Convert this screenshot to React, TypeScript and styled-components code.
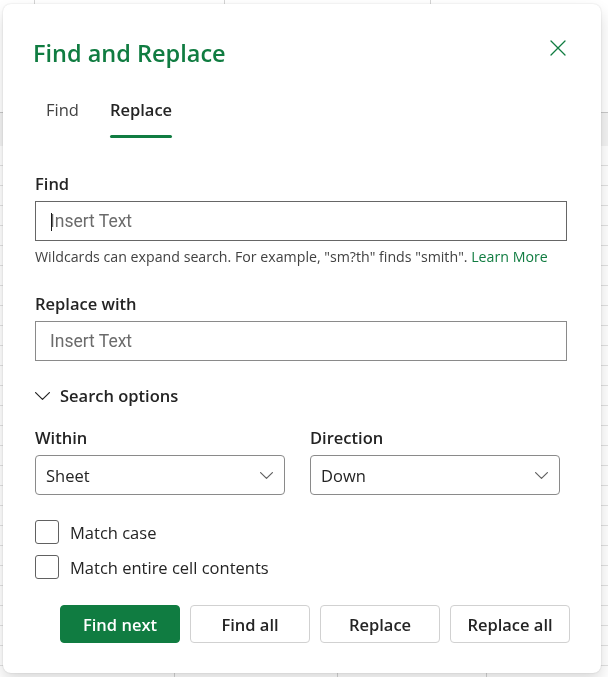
import React from "react";
import styled, { createGlobalStyle } from "styled-components";

const GREEN = "#107c41";
const TEXT = "#242424";

const Global = createGlobalStyle`
  html, body {
    margin: 0;
    padding: 0;
  }
  body {
    width: 608px;
    height: 677px;
    overflow: hidden;
    font-family: "Open Sans", "Noto Sans", sans-serif;
    color: ${TEXT};
    background: #ffffff;
  }
  * { box-sizing: border-box; }
`;

/* Spreadsheet grid that sits behind the modal */
const Sheet = styled.div`
  position: fixed;
  inset: 0;
  background:
    linear-gradient(#c8c8c8, #c8c8c8) 0 112px / 100% 1px no-repeat,
    linear-gradient(#f3f3f3, #f3f3f3) 0 113px / 100% 33px no-repeat,
    linear-gradient(#d4d4d4, #d4d4d4) 34px 0 / 1px 8px no-repeat,
    linear-gradient(#d4d4d4, #d4d4d4) 224px 0 / 1px 8px no-repeat,
    linear-gradient(#d4d4d4, #d4d4d4) 430px 0 / 1px 8px no-repeat,
    linear-gradient(#d4d4d4, #d4d4d4) 174px 668px / 1px 10px no-repeat,
    linear-gradient(#d4d4d4, #d4d4d4) 337px 668px / 1px 10px no-repeat,
    linear-gradient(#d4d4d4, #d4d4d4) 486px 668px / 1px 10px no-repeat,
    repeating-linear-gradient(
        to bottom,
        transparent 0 19px,
        #e1e1e1 19px 20px
      )
      0 146px / 100% 100% no-repeat,
    #ffffff;
`;

const Dialog = styled.section`
  position: absolute;
  left: 3px;
  top: 4px;
  width: 598px;
  height: 669px;
  padding: 33px 34px 0 32px;
  background: #ffffff;
  border-radius: 8px;
  box-shadow: 0 0 2px rgba(0, 0, 0, 0.16), 0 8px 16px rgba(0, 0, 0, 0.14);
  display: flex;
  flex-direction: column;
`;

const Header = styled.header`
  display: flex;
  align-items: flex-start;
  justify-content: space-between;
  height: 32px;
`;

const Title = styled.h1`
  margin: 0 0 0 -2px;
  font-size: 23.5px;
  line-height: 32px;
  font-weight: 600;
  color: ${GREEN};
`;

const CloseButton = styled.button`
  width: 24px;
  height: 24px;
  margin: -1.5px -2.5px 0 0;
  padding: 0;
  border: 0;
  background: transparent;
  display: flex;
  align-items: center;
  justify-content: center;
  color: ${GREEN};
`;

const TabList = styled.div`
  display: flex;
  gap: 11px;
  margin-top: 19px;
  padding-left: 1px;
`;

const Tab = styled.button<{ $active?: boolean }>`
  position: relative;
  padding: 10px 10px 16px;
  border: 0;
  background: transparent;
  font-family: inherit;
  font-size: 16.5px;
  line-height: 24px;
  font-weight: ${(p) => (p.$active ? 600 : 400)};
  color: ${(p) => (p.$active ? TEXT : "#424242")};

  &::after {
    content: "";
    position: absolute;
    left: 10px;
    right: 10px;
    bottom: 0;
    height: 3px;
    border-radius: 2px;
    background: ${(p) => (p.$active ? GREEN : "transparent")};
  }
`;

const Field = styled.div<{ $top: number }>`
  display: flex;
  flex-direction: column;
  margin-top: ${(p) => p.$top}px;
`;

const Label = styled.label`
  font-size: 16.5px;
  line-height: 24px;
  font-weight: 600;
  color: ${TEXT};
  margin-bottom: 5px;
`;

const InputWrap = styled.div`
  position: relative;
  display: flex;
`;

const TextInput = styled.input<{ $strong?: boolean }>`
  width: 100%;
  height: 40px;
  padding: 0 14px;
  border: 1px solid ${(p) => (p.$strong ? "#666666" : "#8a8a8a")};
  border-radius: 0;
  outline: none;
  font-family: Roboto, "Liberation Sans", sans-serif;
  font-size: 17.5px;
  color: ${TEXT};
  background: #ffffff;

  &::placeholder {
    color: #6b6b6b;
  }
`;

const Caret = styled.span`
  position: absolute;
  left: 16px;
  top: 12px;
  width: 1px;
  height: 18px;
  background: #1a1a1a;
`;

const Hint = styled.p`
  margin: 6px 0 0;
  font-size: 14.2px;
  line-height: 20px;
  color: #424242;
  white-space: nowrap;
`;

const Link = styled.a`
  color: ${GREEN};
  text-decoration: none;
`;

const Disclosure = styled.button`
  display: flex;
  align-items: center;
  gap: 10px;
  margin-top: 23px;
  padding: 0;
  border: 0;
  background: transparent;
  font-family: inherit;
  font-size: 16.5px;
  line-height: 24px;
  font-weight: 600;
  color: ${TEXT};
  align-self: flex-start;
`;

const OptionGrid = styled.div`
  display: grid;
  grid-template-columns: 250px 250px;
  column-gap: 25px;
  margin-top: 18px;
`;

const Select = styled.div`
  height: 40px;
  padding: 0 11px 0 10px;
  border: 1px solid #8a8a8a;
  border-radius: 4px;
  display: flex;
  align-items: center;
  justify-content: space-between;
  font-size: 16.5px;
  color: ${TEXT};
`;

const Checks = styled.div`
  display: flex;
  flex-direction: column;
  gap: 11px;
  margin-top: 25px;
`;

const CheckRow = styled.label`
  display: flex;
  align-items: center;
  gap: 11px;
  height: 24px;
  font-size: 16.5px;
  color: ${TEXT};
`;

const Box = styled.span`
  width: 24px;
  height: 24px;
  border: 1px solid #616161;
  border-radius: 3px;
  background: #ffffff;
`;

const Actions = styled.div`
  display: flex;
  justify-content: flex-end;
  gap: 10px;
  margin: 26px -3px 0 0;
`;

const ActionButton = styled.button<{ $primary?: boolean }>`
  width: 120px;
  height: 38px;
  border-radius: 4px;
  border: 1px solid ${(p) => (p.$primary ? GREEN : "#d1d1d1")};
  background: ${(p) => (p.$primary ? GREEN : "#ffffff")};
  color: ${(p) => (p.$primary ? "#ffffff" : TEXT)};
  font-family: inherit;
  font-size: 16.5px;
  font-weight: 600;
  padding: 0;
`;

const Chevron = ({ w, h, color }: { w: number; h: number; color: string }) => (
  <svg width={w} height={h} viewBox={`0 0 ${w} ${h}`} fill="none">
    <path
      d={`M0.6 0.6 L${w / 2} ${h - 0.6} L${w - 0.6} 0.6`}
      stroke={color}
      strokeWidth="1.2"
      strokeLinecap="round"
      strokeLinejoin="round"
    />
  </svg>
);

export default function App() {
  return (
    <>
      <Global />
      <Sheet />
      <Dialog role="dialog" aria-label="Find and Replace">
        <Header>
          <Title>Find and Replace</Title>
          <CloseButton aria-label="Close">
            <svg width="16" height="16" viewBox="0 0 16 16" fill="none">
              <path
                d="M1 1 L15 15 M15 1 L1 15"
                stroke={GREEN}
                strokeWidth="1.3"
                strokeLinecap="round"
              />
            </svg>
          </CloseButton>
        </Header>

        <TabList role="tablist">
          <Tab role="tab">Find</Tab>
          <Tab role="tab" $active>
            Replace
          </Tab>
        </TabList>

        <Field $top={34}>
          <Label>Find</Label>
          <InputWrap>
            <TextInput $strong placeholder="Insert Text" />
            <Caret />
          </InputWrap>
          <Hint>
            Wildcards can expand search. For example, "sm?th" finds "smith".{" "}
            <Link href="#">Learn More</Link>
          </Hint>
        </Field>

        <Field $top={25}>
          <Label>Replace with</Label>
          <InputWrap>
            <TextInput placeholder="Insert Text" />
          </InputWrap>
        </Field>

        <Disclosure>
          <Chevron w={15} h={8} color={TEXT} />
          Search options
        </Disclosure>

        <OptionGrid>
          <Field $top={0}>
            <Label>Within</Label>
            <Select>
              Sheet
              <Chevron w={13} h={7} color="#616161" />
            </Select>
          </Field>
          <Field $top={0}>
            <Label>Direction</Label>
            <Select>
              Down
              <Chevron w={13} h={7} color="#616161" />
            </Select>
          </Field>
        </OptionGrid>

        <Checks>
          <CheckRow>
            <Box />
            Match case
          </CheckRow>
          <CheckRow>
            <Box />
            Match entire cell contents
          </CheckRow>
        </Checks>

        <Actions>
          <ActionButton $primary>Find next</ActionButton>
          <ActionButton>Find all</ActionButton>
          <ActionButton>Replace</ActionButton>
          <ActionButton>Replace all</ActionButton>
        </Actions>
      </Dialog>
    </>
  );
}
